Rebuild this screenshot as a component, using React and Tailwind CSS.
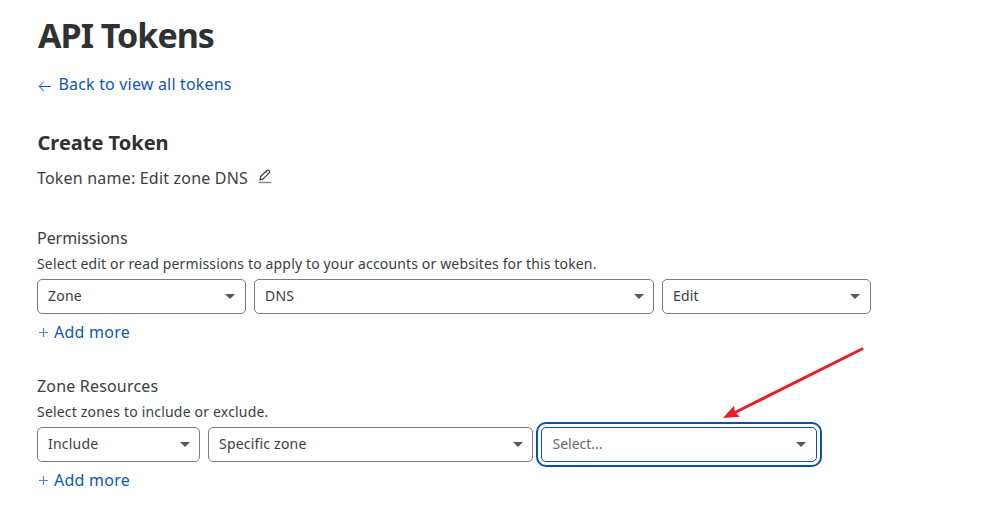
function Caret() {
  return (
    <svg width="10" height="5" viewBox="0 0 10 5" className="shrink-0" aria-hidden="true">
      <path d="M0 0h10L5 5z" fill="#56585a" />
    </svg>
  );
}

function Select({ label, className, placeholder = false }) {
  return (
    <button
      type="button"
      className={`flex h-[35px] items-center justify-between rounded-[5px] border bg-white text-[14px] leading-5 ${className} ${
        placeholder
          ? "border-[#0b50ad] pl-[10.5px] text-[#66686a] outline-2 outline-offset-3 outline-[#0b50ad]"
          : "border-[#7a7c7e] pl-[10px] tracking-[0.2px] text-[#3b3e3f]"
      }`}
    >
      <span className="-mt-px">{label}</span>
      <Caret />
    </button>
  );
}

function AddMore() {
  return (
    <a className="mt-[6px] flex h-6 items-center gap-[6px] pl-px text-[16px] leading-6 tracking-[0.25px] text-[#0f57b5]">
      <svg width="10" height="10" viewBox="0 0 10 10" fill="none" stroke="#4f86cc" aria-hidden="true">
        <path d="M5.5 1v9M1 5.5h9" strokeWidth="1.2" />
      </svg>
      <span>Add more</span>
    </a>
  );
}

function Section({ title, titleClass, hint, hintClass, children }) {
  return (
    <section>
      <h3 className={`h-6 text-[16px] leading-6 ${titleClass}`}>{title}</h3>
      <p className={`mt-[4px] h-5 text-[14px] leading-5 ${hintClass}`}>{hint}</p>
      <div className="mt-[5px] flex gap-2">{children}</div>
      <AddMore />
    </section>
  );
}

export default function App() {
  return (
    <main className="relative h-[517px] w-[985px] overflow-hidden bg-white pt-[11px] pl-[37px] font-['Noto_Sans',sans-serif] text-[#3b3e3f]">
      <h1 className="h-12 pl-px text-[34px] leading-[48px] font-bold tracking-[-0.98px] text-[#2f3132]">API Tokens</h1>
      <a className="mt-[13px] flex h-6 items-center gap-2 pl-px text-[16px] leading-6 tracking-[0.18px] text-[#0f57b5]">
        <svg width="13" height="12" viewBox="0 0 13 12" fill="none" stroke="currentColor" className="mt-[3px]" aria-hidden="true">
          <path d="M5.8 1.6L1.2 6.5 5.8 11.2M1.2 6.5H13" />
        </svg>
        <span className="-ml-[0.5px]">Back to view all tokens</span>
      </a>
      <h2 className="mt-8 h-[30px] pl-[0.5px] text-[20px] leading-[30px] font-bold text-[#2f3132]">Create Token</h2>
      <div className="mt-2 flex h-6 items-center gap-[10px] text-[16px] leading-6 tracking-[0.2px]">
        <span>Token name: Edit zone DNS</span>
        <svg width="14" height="15" viewBox="0 0 14 15" fill="none" stroke="#3f4244" className="-mt-[3px]" aria-hidden="true">
          <path d="M1.9 10.9L2.7 7.5 8.8 1.5Q9.8.7 10.7 1.5L11.2 2Q12.1 2.9 11.2 3.9L5.1 9.9Z" strokeWidth="1.2" strokeLinejoin="round" />
          <path d="M7.9 2.5L10.2 4.7" strokeWidth="0.7" />
          <path d="M.5 13.5h13" stroke="#808284" strokeWidth="1.4" />
        </svg>
      </div>
      <div className="mt-9">
        <Section
          title="Permissions"
          titleClass="tracking-[-0.05px]"
          hint="Select edit or read permissions to apply to your accounts or websites for this token."
          hintClass="tracking-[0.15px]"
        >
          <Select label="Zone" className="w-[209px] pr-[10px]" />
          <Select label="DNS" className="w-[400px] pr-[9px]" />
          <Select label="Edit" className="w-[209px] pr-[10px]" />
        </Section>
      </div>
      <div className="mt-[30px]">
        <Section
          title="Zone Resources"
          titleClass="tracking-[0.18px]"
          hint="Select zones to include or exclude."
          hintClass="tracking-[0.19px]"
        >
          <Select label="Include" className="w-[163px] pr-[9px]" />
          <Select label="Specific zone" className="w-[325px] pr-[9px]" />
          <Select label="Select..." className="w-[276px] pr-[10px]" placeholder />
        </Section>
      </div>
      <svg className="absolute top-[340px] left-[715px]" width="155" height="85" viewBox="715 340 155 85" aria-hidden="true">
        <path d="M862 349L735 412.5" stroke="#df252c" strokeWidth="3" strokeLinecap="round" />
        <path d="M723 418L734 405.8 734.8 411.8 739.8 416.7Z" fill="#ed1c24" />
      </svg>
    </main>
  );
}
